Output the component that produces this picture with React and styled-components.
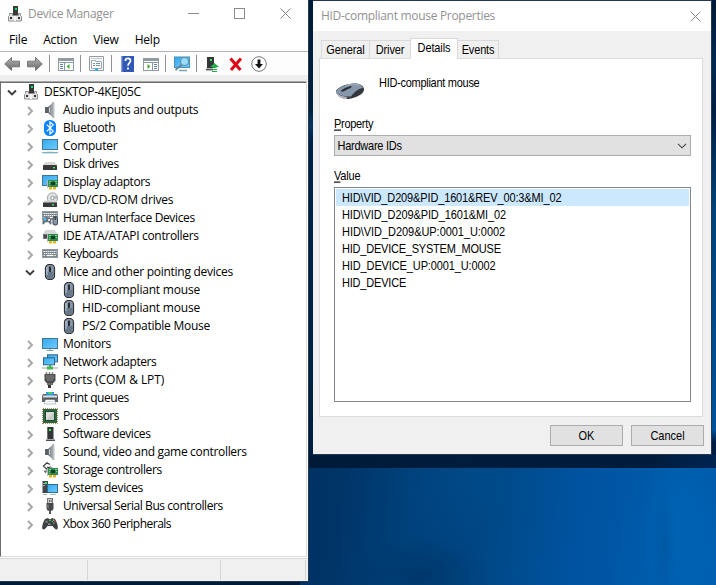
import React from "react";
import styled, { createGlobalStyle, css } from "styled-components";

const GlobalStyle = createGlobalStyle`
  *, *::before, *::after { box-sizing: border-box; }
  body { margin: 0; overflow: hidden; }
`;

const Desktop = styled.div`
  display: flex;
  align-items: flex-start;
  gap: 4px;
  width: 716px;
  height: 585px;
  overflow: hidden;
  background:
    linear-gradient(#001a39, #001a39) 0 582px / 300px 3px no-repeat,
    linear-gradient(90deg, #001a38 0, #001d3e 150px, #001c3c 340px, #002450 100%) 309px 455px / 407px 13px no-repeat,
    linear-gradient(180deg, #001b38, #00203f 110px, #073765 126px, #00234a 140px, #001f42 455px) 309px 0 / 4px 455px no-repeat,
    linear-gradient(180deg, #001a38, #00294f 60px, #001f42 110px, #004279 210px, #00529a 430px, #001d40 442px, #001f43 468px) 712px 0 / 4px 468px no-repeat,
    radial-gradient(ellipse 12px 60px at 664px 545px, rgba(0, 66, 128, 0.25) 0, rgba(0, 66, 128, 0) 100%),
    radial-gradient(ellipse 40px 90px at 680px 520px, rgba(0, 103, 184, 0.5) 0, rgba(0, 103, 184, 0) 100%),
    radial-gradient(ellipse 90px 120px at 700px 570px, rgba(0, 97, 180, 0.8) 0, rgba(0, 97, 180, 0) 100%),
    radial-gradient(ellipse 80px 60px at 475px 480px, rgba(0, 78, 142, 0.45) 0, rgba(0, 78, 142, 0) 100%),
    radial-gradient(ellipse 70px 40px at 420px 575px, rgba(0, 48, 96, 0.6) 0, rgba(0, 48, 96, 0) 100%),
    linear-gradient(95deg, #003160 309px, #003467 380px, #00417b 450px, #004785 530px, #0053a0 620px, #005bab 716px);
`;

/* ---------- Device Manager ---------- */

const ManagerWindow = styled.section`
  display: flex;
  flex-direction: column;
  width: 309px;
  height: 582px;
  background: #fff;
  border: solid #25394e;
  border-width: 0 1px 1px 0;
  color: #000;
  font: 12px/18px "Open Sans", "Noto Sans", sans-serif;
`;

const TitleBar = styled.header`
  display: flex;
  align-items: center;
  height: 27px;
  padding-left: 7px;
  color: #929292;
`;

const Title = styled.h1`
  flex: 1;
  margin: 0 0 0 5px;
  font-size: 12px;
  font-weight: 400;
  letter-spacing: -0.3px;
  white-space: nowrap;
`;

const CaptionButton = styled.button`
  display: grid;
  place-items: center;
  width: 46px;
  height: 27px;
  padding: 0;
  border: 0;
  background: none;
`;

const MenuBar = styled.nav`
  display: flex;
  align-items: center;
  gap: 16px;
  height: 25px;
  padding: 1px 9px 0;
  line-height: 24px;
  letter-spacing: -0.2px;
`;

const MenuItem = styled.span`
  white-space: nowrap;
`;

const ToolBar = styled.div`
  display: flex;
  align-items: center;
  height: 24px;
  margin-top: -1px;
  padding-left: 1px;
  border-top: 1px solid #b4b6ba;
  background: #fdfdfd;
`;

const ToolButton = styled.button`
  display: flex;
  align-items: center;
  width: 23px;
  height: 23px;
  padding: 1px 0 0 3px;
  border: 0;
  background: none;
`;

const ToolSeparator = styled.i`
  width: 1px;
  height: 17px;
  margin: 0 5px 0 2px;
  background: #8f8f8f;
`;

const TreeFrame = styled.div`
  flex: 1;
  padding-top: 6px;
  padding-right: 1px;
  background: linear-gradient(#efefef, #efefef) 0 0 / 100% 6px no-repeat;
`;

const Tree = styled.ul`
  height: 476px;
  margin: 0;
  padding: 1px 0 0;
  list-style: none;
  border: 1px solid #6d6d6d;
  border-top-color: #a8a8a8;
  border-right-color: #dcdcdc;
  border-bottom-color: #dcdcdc;
  background: #fff;
  box-shadow: inset 0 1px #6d6d6d;
`;

const TreeRow = styled.li`
  display: grid;
  grid-template-columns: 16px 16px 1fr;
  align-items: center;
  column-gap: 3px;
  height: 18px;
  padding-left: ${(p) => 3 + p.$level * 19}px;
`;

const Expander = styled.span`
  display: grid;
  justify-content: start;
  align-items: center;
  height: 18px;
  padding: 2px 0 0 ${(p) => (p.$root ? 2 : 1)}px;
`;

const RowLabel = styled.span`
  padding-left: 2px;
  letter-spacing: ${(p) => p.$tracking || 0}px;
  white-space: nowrap;
`;

const StatusBar = styled.footer`
  display: flex;
  height: 23px;
  padding: 1px 2px 1px 0;
  border-top: 1px solid #d7d7d7;
  background: #f0f0f0;
`;

const StatusCell = styled.span`
  width: ${(p) => p.$width}px;
  border-right: 1px solid #d5d5d5;
`;

/* ---------- Properties dialog ---------- */

const Dialog = styled.section`
  display: flex;
  flex-direction: column;
  width: 399px;
  height: 455px;
  border: 1px solid #243850;
  border-left: 0;
  background: #f0f0f0;
  color: #000;
  font: 11px/17px "Liberation Sans", Arial, sans-serif;
`;

const DialogTitleBar = styled.header`
  display: flex;
  align-items: center;
  height: 30px;
  padding-left: 3px;
  background: #fff;
  color: #929292;
  font: 12px/18px "Open Sans", "Noto Sans", sans-serif;
`;

const DialogClose = styled(CaptionButton)`
  width: 31px;
  height: 28px;
`;

/* Condensed dialog lettering: taller than it is wide. */
const DialogText = styled.span`
  display: inline-block;
  transform: scaleY(1.12);
  letter-spacing: ${(p) => p.$tracking || 0}px;
  white-space: nowrap;

  u {
    text-underline-offset: 1px;
  }
`;

const TabStrip = styled.div`
  display: flex;
  align-items: flex-end;
  height: 27px;
  padding-left: 8px;
`;

const Tab = styled.button`
  width: ${(p) => p.$width}px;
  height: 18px;
  padding: 1px 0 0;
  border: 1px solid #d9d9d9;
  border-bottom: 0;
  border-right-width: ${(p) => (p.$joined ? 0 : 1)}px;
  background: #f0f0f0;
  color: #000;
  font: inherit;
  text-align: center;
  ${(p) =>
    p.$active &&
    css`
      height: 21px;
      margin-bottom: -1px;
      padding-bottom: 3px;
      background: #fff;
      position: relative;
    `}
  ${(p) =>
    p.$after &&
    css`
      border-left: 0;
    `}
`;

const TabPage = styled.div`
  display: flex;
  flex-direction: column;
  width: 384px;
  height: 359px;
  margin-left: 6px;
  padding: 15px 11px 0 14px;
  border: 1px solid #dcdcdc;
  background: #fff;
`;

const DeviceHeader = styled.div`
  display: flex;
  align-items: flex-start;
  height: 41px;
`;

const MouseArt = styled.div`
  width: 45px;
  padding: 9px 0 0 2px;
`;

const DeviceName = styled.div`
  padding-top: 1px;
`;

const FieldLabel = styled.label`
  height: 17px;
  margin-top: ${(p) => p.$gap}px;
`;

const Select = styled.div`
  display: flex;
  align-items: center;
  justify-content: space-between;
  height: 21px;
  margin-top: 2px;
  padding: 1px 3px 0 2.5px;
  border: 1px solid #adadad;
  background: #e1e1e1;
`;

const ValueList = styled.ul`
  height: 215px;
  margin: 2px 0 0;
  padding: 1px;
  list-style: none;
  border: 1px solid #828790;
`;

const ValueItem = styled.li`
  height: 17px;
  padding: 1px 0 0 6px;
  line-height: 16px;
  background: ${(p) => (p.$selected ? "#cce8ff" : "transparent")};

  ${DialogText} {
    line-height: 17px;
  }
`;

const DialogActions = styled.footer`
  display: flex;
  justify-content: flex-end;
  gap: 8px;
  margin-top: 8px;
  padding-right: 7px;
`;

const PushButton = styled.button`
  width: 73px;
  height: 21px;
  padding: 1px 0 0;
  border: 1px solid #adadad;
  background: #e1e1e1;
  color: #000;
  font: inherit;
`;

/* ---------- Icons ---------- */

const Svg = ({ children }) => (
  <svg width="16" height="16" viewBox="0 0 16 16" display="block">
    <defs>
      <linearGradient id="screen" x1="0" y1="0" x2="1" y2="1">
        <stop offset="0" stopColor="#35a8ef" />
        <stop offset="1" stopColor="#6fcbff" />
      </linearGradient>
      <linearGradient id="metal" x1="0" y1="0" x2="0" y2="1">
        <stop offset="0" stopColor="#b9b9b9" />
        <stop offset="1" stopColor="#626262" />
      </linearGradient>
      <linearGradient id="cone" x1="0" y1="0" x2="1" y2="0">
        <stop offset="0" stopColor="#5d6266" />
        <stop offset="1" stopColor="#b8bdc1" />
      </linearGradient>
    </defs>
    {children}
  </svg>
);

const Card = ({ x = 5, y = 6 }) => (
  <g transform={`translate(${x} ${y})`}>
    <path d="M.5 0v8" stroke="#b8b8b8" />
    <rect x="1" y="0" width="10" height="7" fill="#2f8a50" />
    <rect x="4" y="2" width="4" height="3" fill="#123d28" />
    <path d="M2 1.500h2M8 1.500h2M2 3.500h1M9 3.500h1M2 5.500h1" stroke="#86d292" />
    <path d="M2 7v2.500h3V7M6 7v2.500h3V7" fill="#f0b418" />
  </g>
);

const Keys = ({ y = 5 }) => (
  <g transform={`translate(0 ${y})`}>
    <rect width="16" height="9" fill="#8d989f" />
    <rect x="1" y="1" width="14" height="7" fill="#7b868e" />
    <path d="M1.500 2.500h13M2 4.500h12.500M1.500 6.500h2M12.500 6.500h2" stroke="#fff" strokeWidth="1.200" strokeDasharray="1.300 .7" />
    <path d="M4.500 6.500h7" stroke="#fff" strokeWidth="1.200" />
  </g>
);

const icons = {
  computerBox: (
    <>
      <rect x="6" y="0" width="5" height="10" fill="#39393b" />
      <rect x="8" y="2" width="2" height="2" fill="#18e35b" />
      <path d="M2.500 7.500h3v2h6v-2h2v2l1 1v4.500h-13v-4.500l1-1z" fill="#e4e4e4" stroke="#8e8e8e" />
      <rect x="3" y="11" width="2" height="2" fill="#303030" />
      <rect x="11" y="11" width="2" height="2" fill="#303030" />
      <path d="M7 10h2v5H7z" fill="#fafafa" />
    </>
  ),
  speaker: (
    <>
      <path d="M3 5h3v6H3z" fill="#5c6165" />
      <path d="M6 5l5-4.500v15L6 11z" fill="url(#cone)" />
      <path d="M10.500 .5h1.500v15h-1.500z" fill="#d1d4d6" stroke="#8f9498" strokeWidth=".6" />
      <path d="M7.500 5.500v5" stroke="#d7dadc" />
    </>
  ),
  bluetooth: (
    <>
      <rect x="2" y="0" width="12" height="16" rx="5.500" fill="#0a84ff" />
      <path d="M4.700 4.700l6.500 6.500L8 14V2l3.200 2.800-6.500 6.500" fill="none" stroke="#fff" strokeWidth="1.200" />
    </>
  ),
  computer: (
    <>
      <rect x=".5" y="1.500" width="15" height="10" fill="url(#screen)" stroke="#3f7893" />
      <path d="M5 13.500h6" stroke="#dce9ef" />
      <path d="M0 14.500h16" stroke="#7daec8" />
      <path d="M1 15.500h14" stroke="#cfe4ef" />
    </>
  ),
  disk: (
    <>
      <path d="M3.500 6h9l2.500 3H1z" fill="#d8d8d8" />
      <rect x="1" y="9" width="14" height="5" rx=".6" fill="#38393b" />
      <rect x="11" y="11" width="2" height="1.400" fill="#43e050" />
    </>
  ),
  display: (
    <>
      <rect x=".5" y="1.500" width="15" height="10" fill="url(#screen)" stroke="#3f7893" />
      <Card x={5} y={6} />
    </>
  ),
  dvd: (
    <>
      <circle cx="10.500" cy="6" r="5.200" fill="#dfe2e3" stroke="#969b9e" strokeWidth=".8" />
      <path d="M10.500 6l4-3a5 5 0 0 1 .5 4z" fill="#b7bcbe" />
      <circle cx="10.500" cy="6" r="1.700" fill="#fff" stroke="#8f9497" />
      <path d="M3 8.500h10l2 2H1z" fill="#d0d0d0" />
      <rect x="1" y="10.500" width="14" height="4.500" fill="#38393b" />
      <rect x="10" y="12" width="2" height="1.500" fill="#40df54" />
    </>
  ),
  hid: (
    <>
      <Keys y={1} />
      <path d="M1 14.500C-.2 15 .5 9 2 7.500c2-1 4-.5 6 0 1.500 1.500 2 6.500 1 7-1 .4-2-2-2.500-2.300h-3C3 12.500 2 14.700 1 14.500z" fill="#66737d" />
      <rect x="1.700" y="8" width="2.500" height="2.500" fill="#4ac1fa" />
      <circle cx="7" cy="10" r="1" fill="#fff" />
      <path d="M7.200 7.800h.8" stroke="#e94b3f" />
      <rect x="10.500" y="6" width="5.500" height="9.500" rx="2.700" fill="#454d56" />
      <rect x="11.500" y="7" width="3.500" height="7.500" rx="1.700" fill="#8999a8" />
      <path d="M13.200 7v3" stroke="#222" />
    </>
  ),
  ide: (
    <>
      <path d="M3.500 2h9l3 4H1z" fill="#d4d6d7" />
      <path d="M1 6h15v5H1z" fill="#707478" />
      <path d="M2 7h5v3H2z" fill="#484b4e" />
      <Card x={5} y={6} />
    </>
  ),
  keyboard: <Keys y={3} />,
  mouse: (
    <>
      <rect x="3.500" y=".5" width="9" height="15" rx="3.700" fill="#8797a9" stroke="#303235" strokeWidth="1.200" />
      <path d="M4.500 8v3.500c0 2 1 3.500 3.500 3.500s3.500-1.500 3.500-3.500V8z" fill="#68788b" />
      <path d="M5 3v8" stroke="#bdcad8" strokeWidth="1" />
      <rect x="7" y="2.500" width="2" height="5.500" rx=".7" fill="#25282b" />
    </>
  ),
  monitor: (
    <>
      <rect x=".5" y="2.500" width="15" height="10" fill="url(#screen)" stroke="#3f7893" />
      <path d="M7 13h2v1H7z" fill="#b3c6d0" />
      <path d="M4.500 14.500h7" stroke="#82a3b3" />
    </>
  ),
  network: (
    <>
      <rect x="5.500" y=".8" width="10" height="7" fill="url(#screen)" stroke="#2e6686" />
      <rect x="1.500" y="3.800" width="11" height="7" fill="url(#screen)" stroke="#2e6686" />
      <path d="M7 11h2v2H7z" fill="#45a64c" />
      <path d="M0 14h16" stroke="#c5cec7" strokeWidth="1.800" />
      <rect x="5" y="12.500" width="6" height="3" fill="#43b850" />
    </>
  ),
  port: (
    <>
      <path d="M4.500 0v3M7.500 0v3M10.500 0v3" stroke="#888" strokeWidth="1.500" />
      <path d="M2.500 2h11v6.500L11.500 11h-7l-2-2.500z" fill="#4c4e50" />
      <path d="M4 4h8M4 6h8M5 8h6" stroke="#858789" />
      <path d="M5 11h6v2H5z" fill="#686a6c" />
      <path d="M7.500 13v3" stroke="#333" strokeWidth="3" />
    </>
  ),
  printer: (
    <>
      <path d="M4 2h8v5H4z" fill="#2c9be5" />
      <path d="M6 2h4v2H6z" fill="#46cc68" />
      <path d="M1 4h3l1 2h6l1-2h3l1 2v6H0V6z" fill="#606366" />
      <path d="M1 6.500h14" stroke="#d9dcdf" strokeWidth="2" />
      <path d="M3.500 9h9l1 5h-11z" fill="#fff" stroke="#8e989e" strokeWidth=".6" />
      <path d="M3 9h10" stroke="#303234" />
      <path d="M5 11.500h6" stroke="#c3dfeb" />
    </>
  ),
  processor: (
    <>
      <path d="M1 .5h15M1 15.500h15" stroke="#a99553" strokeDasharray="1 1" />
      <path d="M.5 1v15M15.500 1v15" stroke="#a99553" strokeDasharray="1 1" />
      <rect x="1" y="1" width="14" height="14" fill="#2e6544" />
      <rect x="3" y="3" width="10" height="10" fill="#1e4932" />
      <rect x="4" y="4" width="8" height="8" fill="#dedfdb" />
      <path d="M12 4v8H4z" fill="#c9cbc6" />
    </>
  ),
  software: (
    <>
      <rect x="5" y="1" width="6.500" height="12" fill="#333537" />
      <path d="M5.500 1v12" stroke="#6e7073" />
      <rect x="7" y="3" width="2" height="2" fill="#35ed61" />
      <path d="M4 13.500h9v1.500H4z" fill="#4d4f51" />
    </>
  ),
  storage: (
    <>
      <path d="M8 2.500L5 .8 1.500 4 5 7.500l2.500-2H5" fill="none" stroke="#3e4346" strokeWidth="1.300" />
      <path d="M8 4.500l3 2" stroke="#8f9598" />
      <path d="M1.500 8.500h4l-2 3z" fill="#686d70" />
      <Card x={5} y={6} />
    </>
  ),
  system: (
    <>
      <rect x=".5" y="1" width="5.500" height="12" fill="#434648" />
      <path d="M1 3.500h4M1 5.500h2" stroke="#a6abae" />
      <rect x="3" y="2" width="2" height="2" fill="#3be565" />
      <rect x="5.500" y="4.500" width="10" height="8" fill="url(#screen)" stroke="#2c6c91" />
      <path d="M1 14.500h4M8 14.500h6" stroke="#a1bac8" />
    </>
  ),
  usb: (
    <>
      <rect x="5.500" y=".5" width="5" height="5" fill="#c7c9ca" stroke="#77797b" />
      <path d="M7 3h.8M8.800 3h.8" stroke="#333" strokeWidth="1.500" />
      <path d="M4.500 5h7v5c0 2-1 3-3.500 3s-3.500-1-3.500-3z" fill="#46484a" />
      <path d="M6 6.500v4" stroke="#8e9092" />
      <path d="M8 12v4" stroke="#55575a" strokeWidth="2" />
    </>
  ),
  gamepad: (
    <>
      <path d="M3 3l3-1 1 1h2l1-1 3 1c2 3 3.500 8 2.500 10-1.500 1.500-3.500-1-5-3h-5c-1.500 2-3.500 4.500-5 3C-.5 11 1 6 3 3z" fill="#3c4043" />
      <circle cx="4.500" cy="5.800" r="1.300" fill="#777d80" />
      <path d="M6 8.300h2.500" stroke="#969b9e" strokeWidth="1.400" />
      <circle cx="8" cy="4.400" r=".8" fill="#65cc6b" />
      <circle cx="11.700" cy="4.200" r=".7" fill="#efbd35" />
      <circle cx="10.300" cy="5.500" r=".7" fill="#43a4dd" />
      <circle cx="13" cy="5.800" r=".7" fill="#e04d43" />
      <circle cx="11.700" cy="7.200" r=".7" fill="#54b859" />
    </>
  ),
  back: <path d="M.7 8L7.500 1.500v3.700h8v5.600h-8v3.700z" fill="url(#metal)" stroke="#777" strokeLinejoin="round" />,
  forward: <path d="M15.300 8L8.500 1.500v3.700h-8v5.600h8v3.700z" fill="url(#metal)" stroke="#777" strokeLinejoin="round" />,
  treePane: (
    <>
      <rect x=".5" y="2.500" width="15" height="12" fill="#fff" stroke="#929ba2" />
      <path d="M1 3h14v2H1z" fill="#8f9aa3" />
      <path d="M1 6.500h14M6.500 7v7" stroke="#8998a4" />
      <path d="M2 8.500h3M2 10.500h3M2 12.500h3" stroke="#6188ab" />
      <path d="M11.500 8v5L8.500 10.500z" fill="#43ae2d" />
    </>
  ),
  properties: (
    <>
      <path d="M.5.500h14v14H.5z" fill="#f7f7f7" stroke="#949ca3" />
      <path d="M2 2.500h11" stroke="#c4cacf" />
      <path d="M2.500 4.500h4v1h6v7h-10z" fill="#fff" stroke="#a2abb3" />
      <path d="M4 7.500h2M7 7.500h4M4 9.500h2M7 9.500h4" stroke="#7796ae" />
      <path d="M6 13.500h3" stroke="#1badef" strokeWidth="2" />
    </>
  ),
  help: (
    <>
      <rect x="1.500" y="0" width="12.500" height="16" fill="#3158b5" />
      <path d="M2 0v16" stroke="#7590d0" />
      <path d="M5.300 5c0-2 1-2.700 2.600-2.700s2.600 1 2.600 2.500c0 2-2.500 2.300-2.500 5" fill="none" stroke="#fff" strokeWidth="1.700" />
      <rect x="7.100" y="11.500" width="1.800" height="2" fill="#fff" />
    </>
  ),
  actionPane: (
    <>
      <rect x=".5" y="2.500" width="15" height="12" fill="#fff" stroke="#929ba2" />
      <path d="M1 3h14v2H1z" fill="#8f9aa3" />
      <path d="M1 6.500h14M9.500 7v7" stroke="#8998a4" />
      <path d="M11 8.500h3M11 10.500h3M11 12.500h3" stroke="#6188ab" />
      <path d="M4.500 8v5l3-2.500z" fill="#43ae2d" />
    </>
  ),
  scan: (
    <>
      <rect x=".5" y="1" width="15" height="10.500" fill="url(#screen)" stroke="#4990b5" />
      <path d="M5 14.500h8" stroke="#7ba3b9" strokeWidth="1.500" />
      <circle cx="10.500" cy="5.500" r="4" fill="#9adcfb" stroke="#5e90a8" strokeWidth="1.100" />
      <path d="M8 8.300L1.500 14" stroke="#66869a" strokeWidth="1.700" />
    </>
  ),
  update: (
    <>
      <rect x="2" y="1" width="7" height="11" fill="#343638" />
      <rect x="5" y="3" width="2" height="2" fill="#42e768" />
      <path d="M1 13.500h7" stroke="#606366" strokeWidth="2" />
      <path d="M9.500 7l4.500 4h-2.500v1h-4v-1H5z" fill="#24ae4d" />
      <path d="M7 13.500h5M7 15.500h5" stroke="#24ae4d" />
    </>
  ),
  remove: <path d="M2.500 2.500l10 11.500M13 2.500L3 14" stroke="#df0716" strokeWidth="3" />,
  disable: (
    <>
      <circle cx="8" cy="8" r="7.300" fill="#fff" stroke="#777" />
      <path d="M6.600 3.500h2.800V8H12l-4 4.500L4 8h2.600z" fill="#111" />
    </>
  ),
};

const Icon = ({ name }) => <Svg>{icons[name]}</Svg>;

const Chevron = ({ open }) => (
  <svg width="12" height="12" viewBox="0 0 12 12" display="block">
    <path
      d={open ? "M2 3.500l4 4 4-4" : "M4 2l4 4-4 4"}
      fill="none"
      stroke={open ? "#3d3d3d" : "#a6a6a6"}
      strokeWidth="1.900"
    />
  </svg>
);

const CloseGlyph = () => (
  <svg width="11" height="11" viewBox="0 0 11 11">
    <path d="M.5.5l10 10M10.500.5l-10 10" stroke="#8b8b8b" />
  </svg>
);

const MouseDrawing = () => (
  <svg width="28" height="17" viewBox="0 0 28 17" display="block">
    <path d="M0 7.500C4 3 12 .5 19 .5c5 0 9 2.500 9 6 0 4.500-8 8.500-16 9.500C6 16 0 13 0 7.500z" fill="#33373d" />
    <path d="M0 8c1 3.500 6 5.500 11 6l-.5 2.300C4.500 15.500 0 13 0 8z" fill="#b4b8bd" />
    <path d="M0 8C4 3.500 12 .8 19 .5c4 0 7 1.500 8 4.500-4 .5-8.500 3.500-12 8.500C8 14 1.500 12 0 8z" fill="#8798ac" />
    <path d="M4.500 8c3-2.500 7-4.500 10.500-5 1.500.3 0 2-1.500 2.500-3 .8-4.500 2.500-6.500 3.300z" fill="#2a2f36" />
    <path d="M10 2.500c4-1.500 9-1.700 13-.5" fill="none" stroke="#a9b7c6" />
  </svg>
);

/* ---------- Data ---------- */

const devices = [
  { label: "DESKTOP-4KEJ05C", icon: "computerBox", level: 0, open: true, tracking: -0.33 },
  { label: "Audio inputs and outputs", icon: "speaker", level: 1, tracking: -0.28 },
  { label: "Bluetooth", icon: "bluetooth", level: 1, tracking: -0.33 },
  { label: "Computer", icon: "computer", level: 1, tracking: -0.28 },
  { label: "Disk drives", icon: "disk", level: 1, tracking: -0.45 },
  { label: "Display adaptors", icon: "display", level: 1, tracking: -0.42 },
  { label: "DVD/CD-ROM drives", icon: "dvd", level: 1, tracking: -0.18 },
  { label: "Human Interface Devices", icon: "hid", level: 1, tracking: -0.36 },
  { label: "IDE ATA/ATAPI controllers", icon: "ide", level: 1, tracking: -0.32 },
  { label: "Keyboards", icon: "keyboard", level: 1, tracking: -0.48 },
  { label: "Mice and other pointing devices", icon: "mouse", level: 1, open: true, tracking: -0.26 },
  { label: "HID-compliant mouse", icon: "mouse", level: 2, tracking: -0.2 },
  { label: "HID-compliant mouse", icon: "mouse", level: 2, tracking: -0.2 },
  { label: "PS/2 Compatible Mouse", icon: "mouse", level: 2, tracking: -0.26 },
  { label: "Monitors", icon: "monitor", level: 1, tracking: -0.33 },
  { label: "Network adapters", icon: "network", level: 1, tracking: -0.46 },
  { label: "Ports (COM & LPT)", icon: "port", level: 1, tracking: -0.06 },
  { label: "Print queues", icon: "printer", level: 1, tracking: -0.45 },
  { label: "Processors", icon: "processor", level: 1, tracking: -0.52 },
  { label: "Software devices", icon: "software", level: 1, tracking: -0.42 },
  { label: "Sound, video and game controllers", icon: "speaker", level: 1, tracking: -0.32 },
  { label: "Storage controllers", icon: "storage", level: 1, tracking: -0.39 },
  { label: "System devices", icon: "system", level: 1, tracking: -0.35 },
  { label: "Universal Serial Bus controllers", icon: "usb", level: 1, tracking: -0.43 },
  { label: "Xbox 360 Peripherals", icon: "gamepad", level: 1, tracking: -0.51 },
];

const tools = [
  "back", "forward", null, "treePane", null, "properties", null, "help",
  "actionPane", null, "scan", null, "update", "remove", "disable",
];

const hardwareIds = [
  { id: "HID\\VID_D209&PID_1601&REV_00:3&MI_02", tracking: -0.14 },
  { id: "HID\\VID_D209&PID_1601&MI_02", tracking: -0.11 },
  { id: "HID\\VID_D209&UP:0001_U:0002", tracking: -0.05 },
  { id: "HID_DEVICE_SYSTEM_MOUSE", tracking: -0.22 },
  { id: "HID_DEVICE_UP:0001_U:0002", tracking: -0.12 },
  { id: "HID_DEVICE", tracking: -0.2 },
];

const DeviceManager = () => (
  <ManagerWindow>
    <TitleBar>
      <Icon name="computerBox" />
      <Title>Device Manager</Title>
      <CaptionButton aria-label="Minimize">
        <svg width="11" height="11"><path d="M0 5.500h11" stroke="#8b8b8b" /></svg>
      </CaptionButton>
      <CaptionButton aria-label="Maximize">
        <svg width="11" height="11"><rect x=".5" y=".5" width="10" height="10" fill="none" stroke="#8b8b8b" /></svg>
      </CaptionButton>
      <CaptionButton aria-label="Close"><CloseGlyph /></CaptionButton>
    </TitleBar>
    <MenuBar>
      <MenuItem>File</MenuItem>
      <MenuItem>Action</MenuItem>
      <MenuItem>View</MenuItem>
      <MenuItem>Help</MenuItem>
    </MenuBar>
    <ToolBar>
      {tools.map((name, i) =>
        name ? (
          <ToolButton key={i} aria-label={name}><Icon name={name} /></ToolButton>
        ) : (
          <ToolSeparator key={i} />
        )
      )}
    </ToolBar>
    <TreeFrame>
      <Tree>
        {devices.map((d, i) => (
          <TreeRow key={i} $level={d.level}>
            <Expander $root={d.level === 0}>{d.level < 2 && <Chevron open={d.open} />}</Expander>
            <Icon name={d.icon} />
            <RowLabel $tracking={d.tracking}>{d.label}</RowLabel>
          </TreeRow>
        ))}
      </Tree>
    </TreeFrame>
    <StatusBar>
      <StatusCell $width={88} />
      <StatusCell $width={133} />
      <StatusCell $width={85} />
    </StatusBar>
  </ManagerWindow>
);

const PropertiesDialog = () => (
  <Dialog>
    <DialogTitleBar>
      <Title>HID-compliant mouse Properties</Title>
      <DialogClose aria-label="Close"><CloseGlyph /></DialogClose>
    </DialogTitleBar>
    <TabStrip>
      <Tab $width={48} $joined><DialogText $tracking={-0.1}>General</DialogText></Tab>
      <Tab $width={41} $joined><DialogText $tracking={-0.1}>Driver</DialogText></Tab>
      <Tab $width={48} $active><DialogText $tracking={-0.1}>Details</DialogText></Tab>
      <Tab $width={41} $after><DialogText $tracking={-0.15}>Events</DialogText></Tab>
    </TabStrip>
    <TabPage>
      <DeviceHeader>
        <MouseArt><MouseDrawing /></MouseArt>
        <DeviceName><DialogText $tracking={-0.28}>HID-compliant mouse</DialogText></DeviceName>
      </DeviceHeader>
      <FieldLabel $gap={1}><DialogText $tracking={-0.3}><u>P</u>roperty</DialogText></FieldLabel>
      <Select>
        <DialogText $tracking={-0.25}>Hardware IDs</DialogText>
        <svg width="10" height="6"><path d="M1 .8l4 4 4-4" fill="none" stroke="#444" strokeWidth="1.100" /></svg>
      </Select>
      <FieldLabel $gap={12}><DialogText $tracking={-0.2}><u>V</u>alue</DialogText></FieldLabel>
      <ValueList>
        {hardwareIds.map((h, i) => (
          <ValueItem key={h.id} $selected={i === 0}>
            <DialogText $tracking={h.tracking}>{h.id}</DialogText>
          </ValueItem>
        ))}
      </ValueList>
    </TabPage>
    <DialogActions>
      <PushButton><DialogText>OK</DialogText></PushButton>
      <PushButton><DialogText>Cancel</DialogText></PushButton>
    </DialogActions>
  </Dialog>
);

export default function App() {
  return (
    <>
      <GlobalStyle />
      <Desktop>
        <DeviceManager />
        <PropertiesDialog />
      </Desktop>
    </>
  );
}
